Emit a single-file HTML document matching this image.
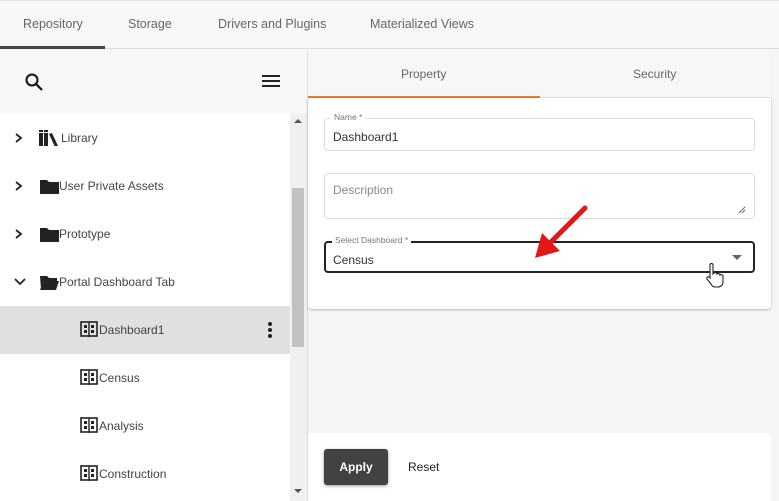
<!DOCTYPE html>
<html><head><style>
*{margin:0;padding:0;box-sizing:border-box}
body{width:779px;height:501px;overflow:hidden;background:#f5f5f5;font-family:"Liberation Sans",sans-serif;position:relative;color:#333}
.abs{position:absolute}
.tab{position:absolute;top:17px;font-size:12.5px;color:#666}
.row{position:absolute;left:0;width:290px;height:48px;font-size:12px;color:#444}
.row span{position:absolute;top:17px}
.chev{position:absolute;left:14px;top:18px}
.fld{position:absolute;left:324px;width:431px;border:1px solid #ddd;border-radius:4px;background:#fff}
.lbl{position:absolute;top:-7px;left:6px;background:#fff;padding:0 3px;font-size:8.5px;color:#777}
</style></head><body>
<div class="abs" style="left:0;top:0;width:779px;height:49px;background:#f7f7f7;border-top:1px solid #e3e3e3;border-bottom:1px solid #ddd"></div>
<div class="tab" style="left:23px">Repository</div>
<div class="tab" style="left:128px">Storage</div>
<div class="tab" style="left:218px">Drivers and Plugins</div>
<div class="tab" style="left:370px">Materialized Views</div>
<div class="abs" style="left:0;top:46px;width:105px;height:3px;background:#444"></div>

<div class="abs" style="left:0;top:50px;width:307px;height:64px;background:#f7f7f7"></div>
<svg class="abs" style="left:24px;top:72px" width="22" height="20" viewBox="0 0 22 20"><circle cx="8" cy="8" r="5.5" fill="none" stroke="#111" stroke-width="2"/><path d="M12 12l6 6" stroke="#111" stroke-width="2.2"/></svg>
<div class="abs" style="left:262px;top:75px;width:18px;height:2px;background:#222;box-shadow:0 5px 0 #222,0 10px 0 #222"></div>
<div class="abs" style="left:0;top:114px;width:290px;height:387px;background:#fff"></div>
<div class="abs" style="left:290px;top:114px;width:17px;height:387px;background:#f0f0f0"></div>
<div class="abs" style="left:292px;top:188px;width:12px;height:159px;background:#c1c1c1"></div>
<div class="abs" style="left:294px;top:119px;border:4px solid transparent;border-bottom:4px solid #555;border-top:0"></div>
<div class="abs" style="left:294px;top:489px;border:4px solid transparent;border-top:4px solid #555;border-bottom:0"></div>
<div class="abs" style="left:307px;top:50px;width:1px;height:451px;background:#ddd"></div>

<div class="row" style="top:114px"><svg class="chev" width="10" height="12"><path d="M2 2l5 4-5 4" fill="none" stroke="#222" stroke-width="1.8"/></svg>
<svg class="abs" style="left:39px;top:16px" width="22" height="16"><rect x="0" y="3" width="4" height="13" fill="#222"/><rect x="5" y="3" width="4" height="13" fill="#222"/><path d="M10 4l3-1 6 13-3 1z" fill="#222"/><rect x="0" y="0" width="4" height="2" fill="#222"/><rect x="5" y="0" width="4" height="2" fill="#222"/></svg><span style="left:61px">Library</span></div>
<div class="row" style="top:162px"><svg class="chev" width="10" height="12"><path d="M2 2l5 4-5 4" fill="none" stroke="#222" stroke-width="1.8"/></svg>
<svg class="abs" style="left:40px;top:17px" width="19" height="15"><path d="M0 1h7l2 2h10v12H0z" fill="#222"/></svg><span style="left:59px">User Private Assets</span></div>
<div class="row" style="top:210px"><svg class="chev" width="10" height="12"><path d="M2 2l5 4-5 4" fill="none" stroke="#222" stroke-width="1.8"/></svg>
<svg class="abs" style="left:40px;top:17px" width="19" height="15"><path d="M0 1h7l2 2h10v12H0z" fill="#222"/></svg><span style="left:59px">Prototype</span></div>
<div class="row" style="top:258px"><svg class="chev" width="12" height="12"><path d="M1 3l5 5 5-5" fill="none" stroke="#222" stroke-width="1.8"/></svg>
<svg class="abs" style="left:40px;top:17px" width="19" height="15"><path d="M0 1h7l2 2h8v3H4L1 14z" fill="#222"/><path d="M4 6h15l-3 9H0z" fill="#222"/></svg><span style="left:59px">Portal Dashboard Tab</span></div>
<div class="row" style="top:306px;background:#e0e0e0"><svg class="abs" style="left:80px;top:15px" width="18" height="17"><rect x="1" y="1" width="16" height="14" fill="none" stroke="#222" stroke-width="1.6"/><path d="M9 1v15" stroke="#222" stroke-width="1.4"/><rect x="4" y="4" width="3" height="3" fill="#222"/><rect x="11" y="4" width="3" height="3" fill="#222"/><rect x="4" y="9" width="3" height="3" fill="#222"/><rect x="11" y="9" width="3" height="3" fill="#222"/></svg><span style="left:99px">Dashboard1</span>
<div class="abs" style="left:268px;top:16px;width:4px;height:4px;border-radius:2px;background:#222;box-shadow:0 6px 0 #222,0 12px 0 #222"></div></div>
<div class="row" style="top:354px"><svg class="abs" style="left:80px;top:15px" width="18" height="17"><rect x="1" y="1" width="16" height="14" fill="none" stroke="#222" stroke-width="1.6"/><path d="M9 1v15" stroke="#222" stroke-width="1.4"/><rect x="4" y="4" width="3" height="3" fill="#222"/><rect x="11" y="4" width="3" height="3" fill="#222"/><rect x="4" y="9" width="3" height="3" fill="#222"/><rect x="11" y="9" width="3" height="3" fill="#222"/></svg><span style="left:99px">Census</span></div>
<div class="row" style="top:402px"><svg class="abs" style="left:80px;top:15px" width="18" height="17"><rect x="1" y="1" width="16" height="14" fill="none" stroke="#222" stroke-width="1.6"/><path d="M9 1v15" stroke="#222" stroke-width="1.4"/><rect x="4" y="4" width="3" height="3" fill="#222"/><rect x="11" y="4" width="3" height="3" fill="#222"/><rect x="4" y="9" width="3" height="3" fill="#222"/><rect x="11" y="9" width="3" height="3" fill="#222"/></svg><span style="left:99px">Analysis</span></div>
<div class="row" style="top:450px"><svg class="abs" style="left:80px;top:15px" width="18" height="17"><rect x="1" y="1" width="16" height="14" fill="none" stroke="#222" stroke-width="1.6"/><path d="M9 1v15" stroke="#222" stroke-width="1.4"/><rect x="4" y="4" width="3" height="3" fill="#222"/><rect x="11" y="4" width="3" height="3" fill="#222"/><rect x="4" y="9" width="3" height="3" fill="#222"/><rect x="11" y="9" width="3" height="3" fill="#222"/></svg><span style="left:99px">Construction</span></div>

<div class="abs" style="left:308px;top:50px;width:463px;height:48px;background:#f7f7f7;border-bottom:1px solid #e3e3e3"></div>
<div class="tab" style="left:401px;top:67px;font-size:12px">Property</div>
<div class="tab" style="left:633px;top:67px;font-size:12px">Security</div>
<div class="abs" style="left:308px;top:96px;width:232px;height:2px;background:#e87a2e"></div>
<div class="abs" style="left:308px;top:98px;width:463px;height:211px;background:#fff;border-radius:0 0 4px 4px;box-shadow:0 1px 2px rgba(0,0,0,.25)"></div>
<div class="fld" style="top:118px;height:33px"><div class="lbl">Name *</div><div class="abs" style="left:8px;top:11px;font-size:12px">Dashboard1</div></div>
<div class="fld" style="top:173px;height:46px"><div class="abs" style="left:8px;top:9px;font-size:12px;color:#888">Description</div>
<svg class="abs" style="right:8px;bottom:4px" width="8" height="8"><path d="M1 7L7 1M4 7L7 4" stroke="#666"/></svg></div>
<div class="fld" style="top:241px;height:32px;border:2px solid #222"><div class="lbl" style="top:-8px">Select Dashboard *</div><div class="abs" style="left:7px;top:10px;font-size:12px">Census</div>
<div class="abs" style="right:11px;top:12px;border:5px solid transparent;border-top:5px solid #666;border-bottom:0"></div></div>
<svg class="abs" style="left:530px;top:203px" width="62" height="62"><path d="M55 5L15 45" stroke="#e01818" stroke-width="5" stroke-linecap="round"/><path d="M5 55L12 30L30 48z" fill="#e01818"/></svg>
<svg class="abs" style="left:705px;top:263px" width="20" height="26"><path d="M5 2c0-2 3-2 3 0v9l1-1c1-1 3 0 3 1 1-1 3 0 3 1 1-1 3 0 3 1v6c0 3-2 5-5 5h-3c-2 0-3-1-4-3l-4-5c-1-1 1-3 2-2l1 1z" fill="#fff" stroke="#222" stroke-width="1.1"/></svg>
<div class="abs" style="left:308px;top:433px;width:463px;height:68px;background:#fff;border-radius:4px 4px 0 0"></div>
<div class="abs" style="left:324px;top:449px;width:64px;height:36px;background:#424242;border-radius:3px;box-shadow:0 1px 3px rgba(0,0,0,.4);color:#fff;font-size:12px;font-weight:bold;text-align:center;line-height:36px">Apply</div>
<div class="abs" style="left:408px;top:460px;font-size:12px;color:#222">Reset</div>
</body></html>
